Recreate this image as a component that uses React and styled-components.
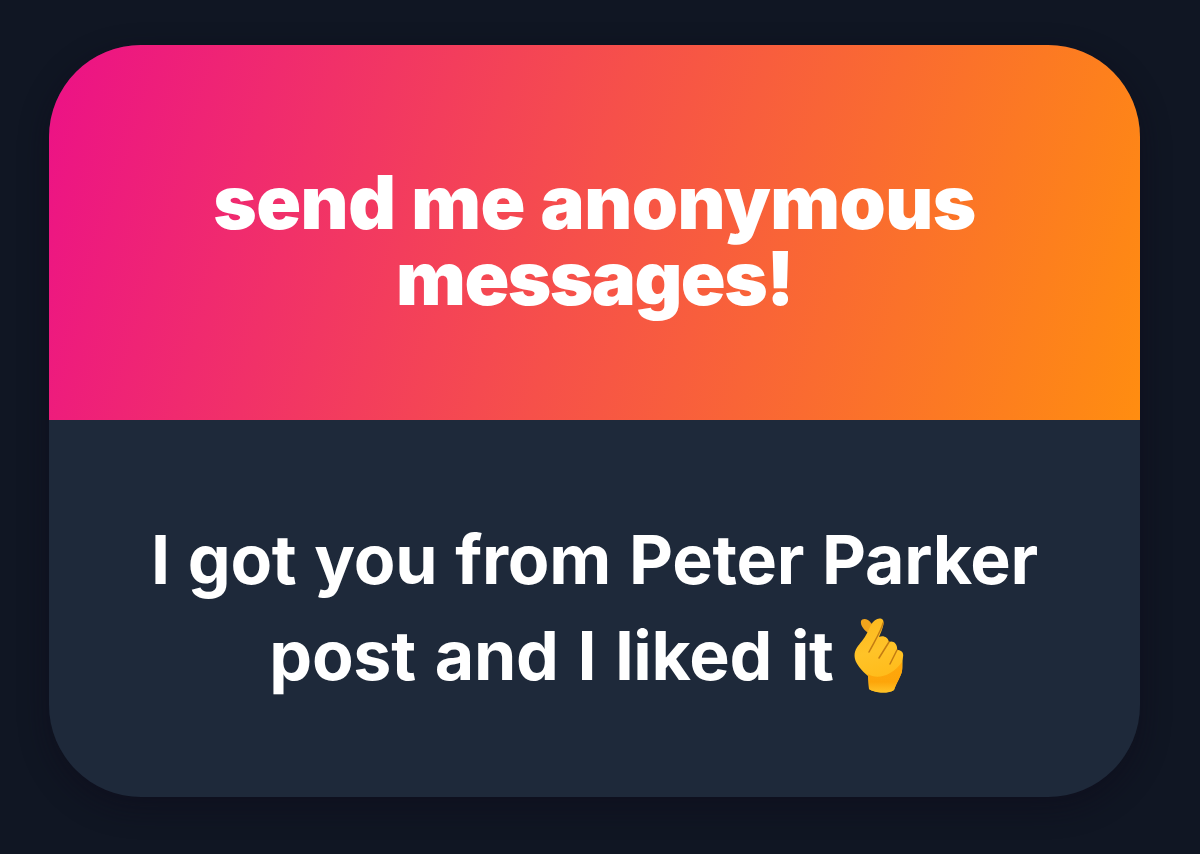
import React from 'react';
import styled, { createGlobalStyle } from 'styled-components';

const GlobalStyle = createGlobalStyle`
  body {
    margin: 0;
    background-color: #101623;
  }
`;

const Page = styled.main`
  box-sizing: border-box;
  height: 854px;
  padding: 45px 60px 57px 49px;
  overflow: hidden;
  background-color: #101623;
  font-family: Inter, 'Liberation Sans', sans-serif;
`;

const Card = styled.article`
  display: flex;
  flex-direction: column;
  height: 752px;
  border-radius: 92px;
  overflow: hidden;
  background-color: #1e293a;
  box-shadow: 0 10px 30px rgba(14, 8, 24, 0.45);
`;

const CardHeader = styled.header`
  box-sizing: border-box;
  height: 375px;
  padding-top: 119px;
  background: linear-gradient(106deg, #ec1187 0%, #f6504a 49%, #ff8d10 100%);
`;

const Prompt = styled.h1`
  margin: 0;
  color: #fff;
  font-size: 74px;
  font-weight: 900;
  line-height: 76px;
  text-align: center;
`;

const CardBody = styled.section`
  flex: 1;
  padding-top: 92px;
`;

const Message = styled.p`
  margin: 0;
  color: #fff;
  font-size: 68px;
  font-weight: 700;
  line-height: 95.5px;
  text-align: center;
`;

const Line = styled.span`
  display: flex;
  justify-content: center;
  white-space: pre;
  letter-spacing: ${(props) => props.$tracking || 0}px;
  word-spacing: ${(props) => props.$gap || 0}px;
`;

const HandIcon = styled.svg`
  width: 52px;
  height: 76px;
  margin: 10px 15px 0 19px;
`;

const FingerHeart = () => (
  <HandIcon viewBox="0 0 52 76" role="img" aria-label="finger heart">
    <defs>
      <linearGradient id="skin" x1="0" y1="0" x2="0.2" y2="1">
        <stop offset="0" stopColor="#fbb81f" />
        <stop offset="0.5" stopColor="#ffc328" />
        <stop offset="1" stopColor="#ffb916" />
      </linearGradient>
      <linearGradient id="wrist" x1="0" y1="0" x2="0" y2="1">
        <stop offset="0" stopColor="#ffa70c" />
        <stop offset="0.65" stopColor="#fda50a" />
        <stop offset="1" stopColor="#ffc328" />
      </linearGradient>
    </defs>
    <path d="M8 3C9 0 15 0 18 5L21 8L17 16C12 13 7 8 8 3Z" fill="#f2a41c" />
    <path
      d="M18 7C21 1 27-1 30 2C32 6 28 14 26 19C30 17 35 19 36 24C40 22 45 26 44 32C48 32 51 34 50 39C49 44 50 49 49 53C48 58 44 64 41 72C35 76 21 75 16 71L15 58C9 53 3 46 2 41C0 33 5 28 9 23C13 18 15 13 18 7Z"
      fill="url(#skin)"
    />
    <path d="M15 56C24 62 39 58 49 44L49 53C48 58 44 64 41 72C35 76 21 75 16 71Z" fill="url(#wrist)" />
    <path
      d="M30 5C29 11 24 19 16 34M36 24L26 40M44 32L37 46"
      fill="none"
      stroke="#c47c12"
      strokeWidth="1.5"
      strokeLinecap="round"
    />
  </HandIcon>
);

const App = () => {
  return (
    <>
      <GlobalStyle />
      <Page>
        <Card>
          <CardHeader>
            <Prompt>
              <Line $tracking={-0.5} $gap={1.5}>send me anonymous</Line>
              <Line $tracking={-1.5}>messages!</Line>
            </Prompt>
          </CardHeader>
          <CardBody>
            <Message>
              <Line $tracking={-0.25} $gap={2}>I got you from Peter Parker</Line>
              <Line $tracking={-0.25} $gap={3}>
                post and I liked it
                <FingerHeart />
              </Line>
            </Message>
          </CardBody>
        </Card>
      </Page>
    </>
  );
};

export default App;
